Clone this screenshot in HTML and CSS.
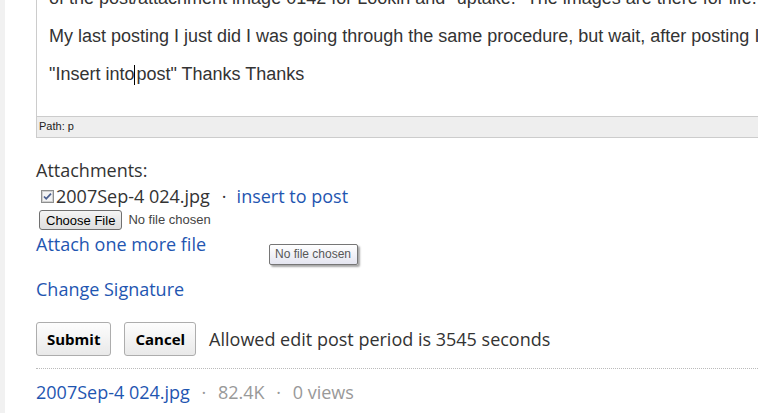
FILE: index.html
```html
<!DOCTYPE html>
<html lang="en">
<head>
    <meta charset="UTF-8">
    <meta name="viewport" content="width=device-width, initial-scale=1.0">
    <title>Edit post</title>
    <link rel="stylesheet" href="styles.css">
</head>
<body>
    <div class="page">
        <div class="side-strip"></div>

        <div class="main">
            <div class="editor">
                <div class="editor-body">
                    <p>of the post/attachment image 0142 for Lookin and "uptake." The images are there for life.</p>
                    <p>My last posting I just did I was going through the same procedure, but wait, after posting I could not</p>
                    <p>"Insert into<span class="caret"></span>post" Thanks Thanks</p>
                </div>
                <div class="editor-path">Path: p</div>
            </div>

            <div class="attachments">
                <div class="attach-title">Attachments:</div>
                <div class="attach-row">
                    <span class="check">
                        <svg width="13" height="13" viewBox="0 0 13 13">
                            <rect x="0.5" y="0.5" width="12" height="12" fill="#e6e6e6" stroke="#8e8f8f"/>
                            <rect x="1.5" y="1.5" width="10" height="10" fill="#f4f4f4" stroke="#d0d0d0"/>
                            <path d="M3 6.5 L5.2 8.8 L10 3.6" fill="none" stroke="#4b5f8e" stroke-width="1.8"/>
                        </svg>
                    </span>
                    <span class="file-name">2007Sep-4 024.jpg</span>
                    <span class="dot">·</span>
                    <a href="#" class="link">insert to post</a>
                </div>
                <div class="file-row">
                    <button class="file-btn">Choose File</button>
                    <span class="file-none">No file chosen</span>
                </div>
                <a href="#" class="link block-link">Attach one more file</a>
            </div>

            <a href="#" class="link block-link signature">Change Signature</a>

            <div class="actions">
                <button class="btn">Submit</button>
                <button class="btn">Cancel</button>
                <span class="edit-note">Allowed edit post period is 3545 seconds</span>
            </div>

            <div class="file-list">
                <a href="#" class="link">2007Sep-4 024.jpg</a>
                <span class="meta">·</span>
                <span class="meta">82.4K</span>
                <span class="meta">·</span>
                <span class="meta">0 views</span>
            </div>
        </div>
    </div>

    <div class="tooltip">No file chosen</div>
</body>
</html>
```

FILE: styles.css
```css
* {
    margin: 0;
    padding: 0;
    box-sizing: border-box;
}

body {
    background: #fff;
    color: #333;
    font-family: "Open Sans", sans-serif;
    overflow: hidden;
    height: 413px;
}

.page {
    display: flex;
    min-height: 413px;
}

.side-strip {
    width: 5px;
    flex-shrink: 0;
    background: #f1f1f1;
}

.main {
    flex: 1;
    padding-left: 31px;
    min-width: 0;
}

.editor {
    width: 760px;
    margin-top: -30px;
    border: 1px solid #ccc;
}

.editor-body {
    padding: 17px 12px 31px;
    font-family: "Liberation Sans", Arial, sans-serif;
    font-size: 18px;
    line-height: 21px;
    color: #333;
    white-space: nowrap;
    overflow: hidden;
}

.editor-body p {
    margin-bottom: 17px;
}

.editor-body p:last-child {
    margin-bottom: 0;
}

.caret {
    display: inline-block;
    width: 1px;
    height: 20px;
    background: #000;
    vertical-align: -5px;
    margin-right: 1px;
}

.editor-path {
    height: 21px;
    border-top: 1px solid #ccc;
    background: #eee;
    padding: 3px 0 0 2px;
    font-family: "Liberation Sans", Arial, sans-serif;
    font-size: 11px;
    color: #222;
}

.attachments {
    margin-top: 19px;
    font-size: 18px;
    line-height: 26px;
}

.attach-row {
    display: flex;
    align-items: baseline;
}

.check {
    align-self: center;
    display: flex;
    margin: 0 2px 0 5px;
}

.dot {
    margin: 0 10px 0 12px;
}

.link {
    color: #1f56b1;
    text-decoration: none;
}

.block-link {
    display: block;
}

.file-row {
    display: flex;
    align-items: center;
    height: 22px;
    padding-left: 3px;
}

.file-btn {
    height: 20px;
    padding: 0 6px;
    font-family: "Liberation Sans", Arial, sans-serif;
    font-size: 13px;
    color: #000;
    border: 1px solid #707070;
    border-radius: 3px;
    background: linear-gradient(#f4f4f4, #dedede);
}

.file-none {
    margin-left: 6px;
    font-family: "Liberation Sans", Arial, sans-serif;
    font-size: 13px;
    color: #444;
}

.signature {
    margin-top: 19px;
    font-size: 18px;
    line-height: 26px;
}

.actions {
    display: flex;
    align-items: center;
    gap: 13px;
    margin-top: 20px;
}

.btn {
    height: 34px;
    padding: 0 10px;
    font-family: "Open Sans", sans-serif;
    font-weight: bold;
    font-size: 15px;
    color: #000;
    border: 1px solid #adadad;
    border-radius: 3px;
    background: linear-gradient(#fdfdfd, #e9e9e9);
}

.edit-note {
    font-size: 18px;
    color: #333;
}

.file-list {
    margin-top: 12px;
    border-top: 1px dotted #bbb;
    padding-top: 10px;
    font-size: 18px;
    line-height: 26px;
}

.meta {
    color: #999;
    margin-left: 7px;
}

.tooltip {
    position: absolute;
    left: 269px;
    top: 244px;
    width: 89px;
    height: 21px;
    padding: 2px 0 0 5px;
    font-family: "Liberation Sans", Arial, sans-serif;
    font-size: 12px;
    color: #575757;
    border: 1px solid #767676;
    border-radius: 2px;
    background: linear-gradient(#fff, #e4e5f0);
    box-shadow: 2px 2px 2px rgba(0, 0, 0, 0.35);
}
```
